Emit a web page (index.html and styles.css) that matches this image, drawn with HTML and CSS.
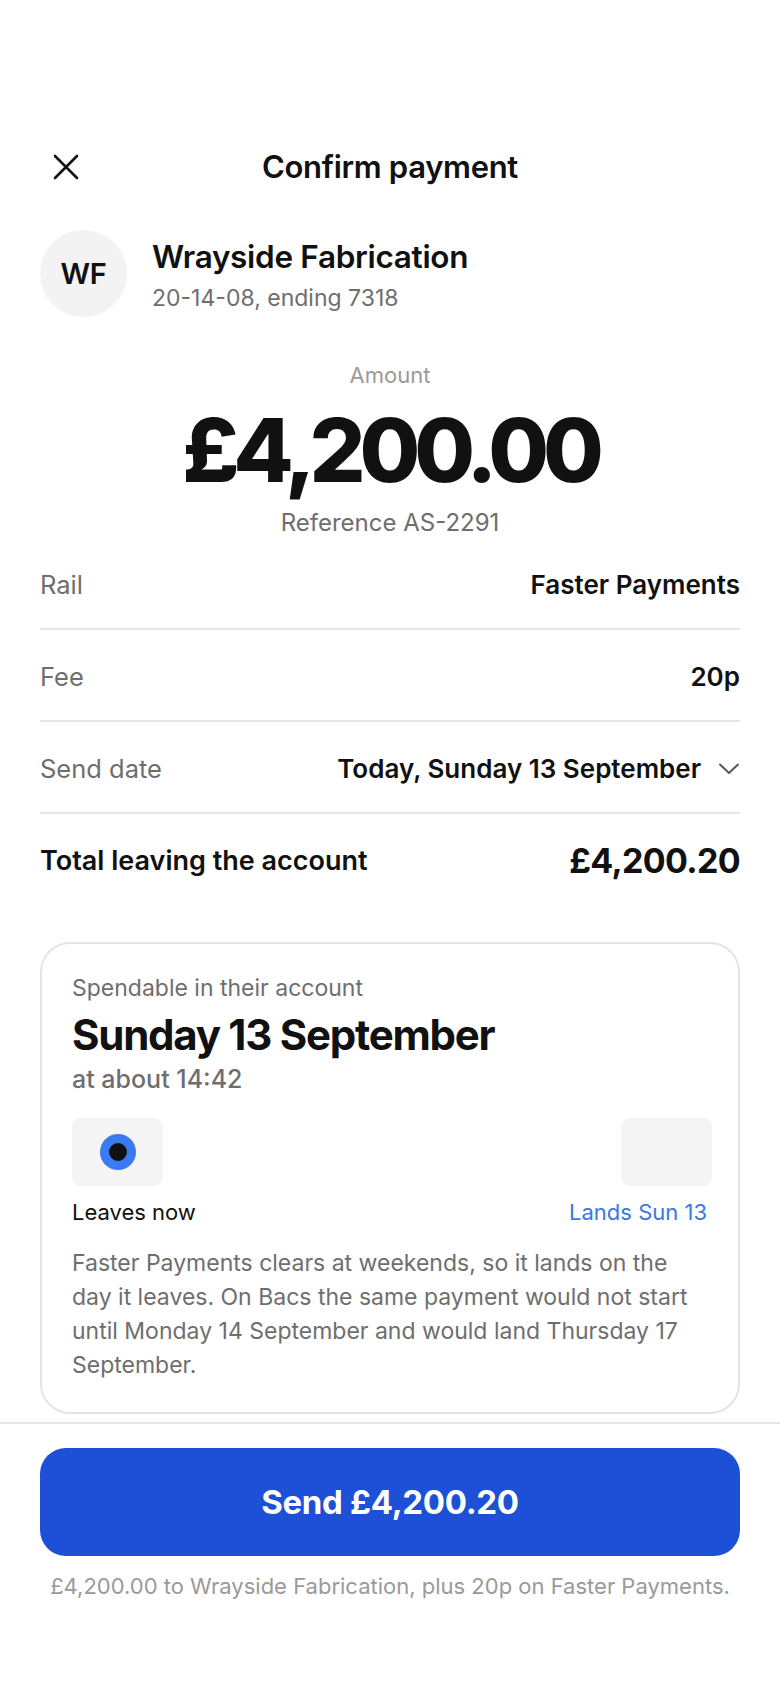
FILE: index.html
```html
<!DOCTYPE html>
<html lang="en">
<head>
<meta charset="utf-8">
<title>Confirm payment</title>
<link rel="stylesheet" href="styles.css">
</head>
<body>
<div class="screen">
  <main class="content">
    <header class="topbar">
      <button class="close" aria-label="Close">
        <svg width="28" height="28" viewBox="0 0 28 28"><path d="M3 3L25 25M25 3L3 25" stroke="#111" stroke-width="2.6" stroke-linecap="round" fill="none"/></svg>
      </button>
      <h1 class="title">Confirm payment</h1>
      <span class="spacer"></span>
    </header>

    <section class="payee">
      <div class="avatar">WF</div>
      <div class="payee-text">
        <div class="payee-name">Wrayside Fabrication</div>
        <div class="payee-sub">20-14-08, ending 7318</div>
      </div>
    </section>

    <section class="amount">
      <div class="amount-label">Amount</div>
      <div class="amount-value">£4,200.00</div>
      <div class="amount-ref">Reference AS-2291</div>
    </section>

    <section class="rows">
      <div class="row">
        <span class="row-label">Rail</span>
        <span class="row-value">Faster Payments</span>
      </div>
      <div class="row">
        <span class="row-label">Fee</span>
        <span class="row-value">20p</span>
      </div>
      <div class="row">
        <span class="row-label">Send date</span>
        <span class="row-value with-icon">Today, Sunday 13 September
          <svg class="chev" width="22" height="12" viewBox="0 0 22 12"><path d="M2 1.5L11 10L20 1.5" stroke="#555" stroke-width="2" stroke-linecap="round" stroke-linejoin="round" fill="none"/></svg>
        </span>
      </div>
      <div class="row total">
        <span class="total-label">Total leaving the account</span>
        <span class="total-value">£4,200.20</span>
      </div>
    </section>

    <section class="card">
      <div class="card-kicker">Spendable in their account</div>
      <div class="card-title">Sunday 13 September</div>
      <div class="card-time">at about 14:42</div>
      <div class="track">
        <div class="stop"><span class="dot"></span></div>
        <div class="stop"></div>
      </div>
      <div class="track-labels">
        <span class="leaves">Leaves now</span>
        <span class="lands">Lands Sun 13</span>
      </div>
      <p class="card-note">Faster Payments clears at weekends, so it lands on the day it leaves. On Bacs the same payment would not start until Monday 14 September and would land Thursday 17 September.</p>
    </section>
  </main>

  <footer class="footer">
    <button class="send">Send £4,200.20</button>
    <p class="footnote">£4,200.00 to Wrayside Fabrication, plus 20p on Faster Payments.</p>
  </footer>
</div>
</body>
</html>
```

FILE: styles.css
```css
* { box-sizing: border-box; }
html, body { margin: 0; padding: 0; background: #fff; }
body {
  font-family: Inter, "Noto Sans", "Liberation Sans", sans-serif;
  color: #111;
  width: 780px;
  min-height: 1688px;
}
.screen { display: flex; flex-direction: column; min-height: 1688px; }
.content { padding: 123px 40px 0; }

.topbar {
  height: 88px;
  display: grid;
  grid-template-columns: 1fr auto 1fr;
  align-items: center;
}
.close {
  justify-self: start;
  width: 48px; height: 48px;
  padding: 0 0 0 12px;
  border: 0; background: none;
  display: flex; align-items: center; justify-content: flex-start;
}
.title {
  margin: 0;
  font-size: 31px;
  font-weight: 600;
  letter-spacing: -0.01em;
  line-height: 40px;
}

.payee {
  margin-top: 19px;
  display: flex;
  align-items: center;
  gap: 25px;
}
.avatar {
  width: 87px; height: 87px;
  border-radius: 50%;
  background: #f3f3f3;
  display: flex; align-items: center; justify-content: center;
  font-size: 29px; font-weight: 600;
  letter-spacing: -0.01em;
}
.payee-text { display: flex; flex-direction: column; gap: 7px; padding-top: 5px; }
.payee-name { font-size: 31.5px; font-weight: 600; line-height: 38px; letter-spacing: -0.01em; }
.payee-sub { font-size: 23px; line-height: 31px; color: #6e6e6e; }

.amount { margin-top: 43px; text-align: center; }
.amount-label { font-size: 22px; line-height: 30px; color: #9a9a9a; }
.amount-value {
  margin-top: 10px;
  font-size: 88px;
  line-height: 100px;
  font-weight: 800;
  letter-spacing: -0.07em;
}
.amount-ref { margin-top: 8px; font-size: 24px; line-height: 30px; color: #6e6e6e; }

.rows { margin-top: 0; }
.row {
  display: flex;
  justify-content: space-between;
  align-items: center;
  padding: 31px 0 27px;
  line-height: 32px;
  border-bottom: 2px solid #e6e6e6;
}
.row.total { border-bottom: 0; }
.row-label { font-size: 25.5px; color: #6e6e6e; }
.row-value { font-size: 26px; font-weight: 600; }
.with-icon { display: flex; align-items: center; gap: 17px; }
.chev { display: block; }
.total-label { font-size: 27px; font-weight: 600; }
.total-value { font-size: 34px; font-weight: 700; letter-spacing: -0.02em; }

.card {
  margin-top: 38px;
  border: 2px solid #e4e4e4;
  border-radius: 30px;
  padding: 29px 30px 30px;
}
.card-kicker { font-size: 23px; line-height: 30px; color: #6e6e6e; }
.card-title {
  margin-top: 6px;
  font-size: 42px;
  line-height: 52px;
  font-weight: 700;
  letter-spacing: -0.03em;
}
.card-time { margin-top: 3px; font-size: 25px; line-height: 30px; color: #6e6e6e; font-weight: 500; }
.track {
  margin: 24px -4px 0 0;
  display: flex;
  justify-content: space-between;
}
.stop {
  width: 91px; height: 68px;
  border-radius: 9px;
  background: #f4f4f4;
  display: flex; align-items: center; justify-content: center;
}
.dot {
  width: 36px; height: 36px;
  border-radius: 50%;
  background: #111;
  border: 9px solid #3b7af0;
}
.track-labels {
  margin: 11px -4px 0 0;
  display: flex;
  justify-content: space-between;
  font-size: 22px;
  line-height: 30px;
  padding-right: 5px;
}
.leaves { color: #111; }
.lands { color: #3b78e0; }
.card-note {
  margin: 19px 0 0;
  font-size: 23px;
  line-height: 34px;
  color: #6e6e6e;
}

.footer {
  margin-top: 8px;
  border-top: 2px solid #e6e6e6;
  padding: 24px 40px 0;
  flex: 1;
}
.send {
  display: block;
  width: 100%;
  height: 108px;
  border: 0;
  border-radius: 26px;
  background: #1d50d6;
  color: #fff;
  font-family: inherit;
  font-size: 33px;
  font-weight: 700;
  letter-spacing: -0.01em;
}
.footnote {
  margin: 15px 0 0;
  text-align: center;
  font-size: 22px;
  line-height: 30px;
  color: #9a9a9a;
}
```
